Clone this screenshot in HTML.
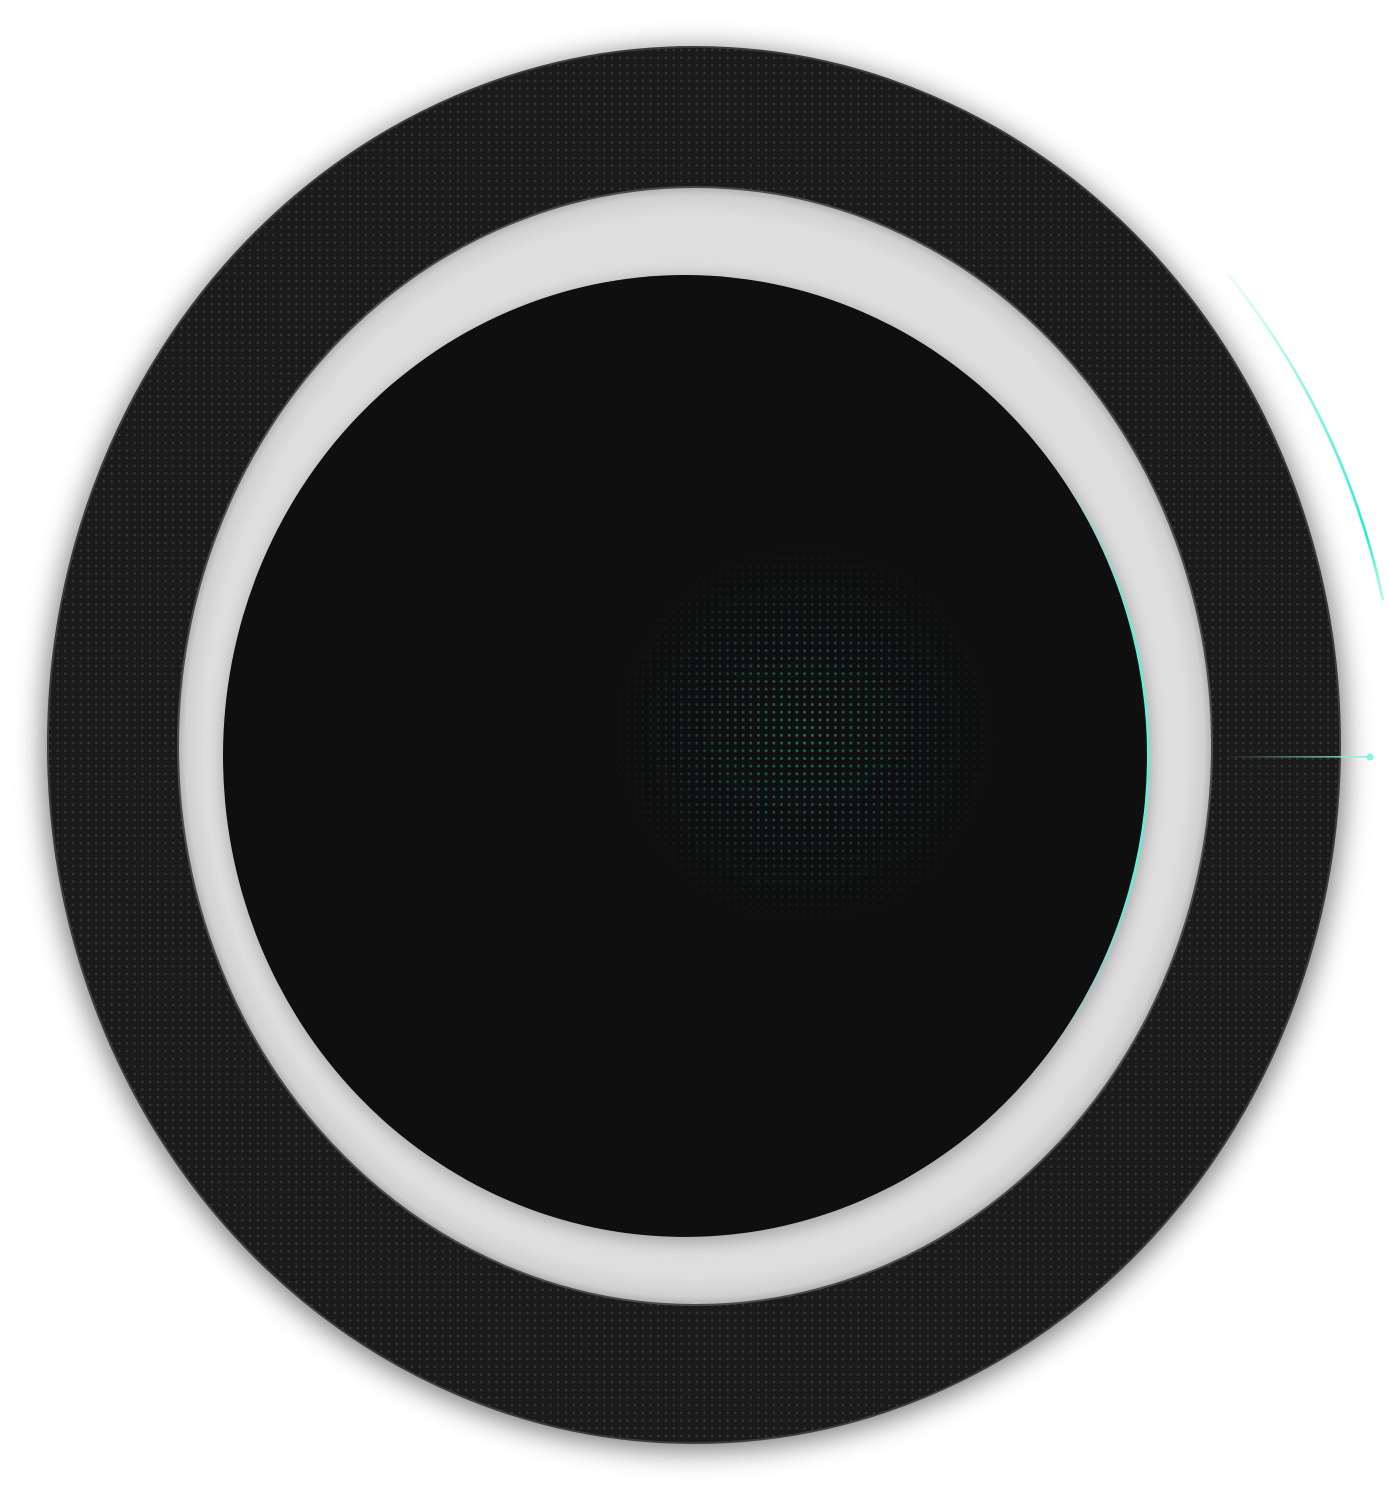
<!DOCTYPE html>
<html><head><style>html,body{margin:0;padding:0;background:#fff;width:1389px;height:1491px;overflow:hidden}</style></head>
<body>
<svg width="1389" height="1491" viewBox="0 0 1389 1491" xmlns="http://www.w3.org/2000/svg">
<defs>
<pattern id="dots" width="7.7" height="7.7" patternUnits="userSpaceOnUse">
<rect width="7.7" height="7.7" fill="#1b1b1c"/>
<circle cx="3.8" cy="3.8" r="1.3" fill="#353536"/>
</pattern>
<pattern id="gdots" width="7.7" height="7.7" patternUnits="userSpaceOnUse">
<circle cx="3.8" cy="3.8" r="1.5" fill="#1f7462"/>
</pattern>
<radialGradient id="gmask" cx="0.5" cy="0.5" r="0.5">
<stop offset="0" stop-color="#fff" stop-opacity="0.95"/>
<stop offset="1" stop-color="#fff" stop-opacity="0"/>
</radialGradient>
<mask id="m"><ellipse cx="805" cy="735" rx="200" ry="195" fill="url(#gmask)"/></mask>
<filter id="sh" x="-10%" y="-10%" width="120%" height="120%"><feGaussianBlur stdDeviation="14"/></filter>
<filter id="sh2" x="-10%" y="-10%" width="120%" height="120%"><feGaussianBlur stdDeviation="8"/></filter>
<radialGradient id="ring" cx="0.5" cy="0.5" r="0.5">
<stop offset="0.95" stop-color="#dedede"/>
<stop offset="0.985" stop-color="#d0d0d0"/>
<stop offset="1" stop-color="#b0b0b0"/>
</radialGradient>
<linearGradient id="arc" x1="0" y1="0" x2="0" y2="1">
<stop offset="0" stop-color="#2de6c8" stop-opacity="0.1"/>
<stop offset="0.8" stop-color="#16f0d0" stop-opacity="1"/>
<stop offset="1" stop-color="#7ff5e4" stop-opacity="0.6"/>
</linearGradient>
<linearGradient id="ln" gradientUnits="userSpaceOnUse" x1="1225" y1="0" x2="1370" y2="0">
<stop offset="0" stop-color="#7ee8d6" stop-opacity="0"/>
<stop offset="1" stop-color="#8ef0de"/>
</linearGradient>
<linearGradient id="edge" gradientUnits="userSpaceOnUse" x1="0" y1="470" x2="0" y2="1045">
<stop offset="0" stop-color="#5ff0dc" stop-opacity="0"/>
<stop offset="0.3" stop-color="#5ff0dc"/>
<stop offset="0.7" stop-color="#5ff0dc"/>
<stop offset="1" stop-color="#5ff0dc" stop-opacity="0"/>
</linearGradient>
<clipPath id="cl"><rect x="1040" y="460" width="200" height="590"/></clipPath>
</defs>
<ellipse cx="694" cy="750" rx="650" ry="700" fill="#000" opacity="0.55" filter="url(#sh)"/>
<ellipse cx="694" cy="745" rx="646" ry="698" fill="url(#dots)" stroke="#3c3c3c" stroke-width="2"/>
<ellipse cx="695" cy="746" rx="517" ry="559" fill="url(#ring)" stroke="#4a4a4a" stroke-width="2"/>
<ellipse cx="687" cy="760" rx="464" ry="483" fill="#000" opacity="0.25" filter="url(#sh2)"/>
<ellipse cx="686" cy="756" rx="462" ry="481" fill="none" stroke="url(#edge)" stroke-width="3" clip-path="url(#cl)"/>
<ellipse cx="685" cy="756" rx="462" ry="481" fill="#0f0f0f"/>
<rect x="600" y="530" width="410" height="410" fill="url(#gdots)" mask="url(#m)"/>
<path d="M1228 274 Q1345 420 1383 600" fill="none" stroke="url(#arc)" stroke-width="2.5"/>
<rect x="1225" y="756" width="145" height="1.6" fill="url(#ln)"/>
<circle cx="1370" cy="757" r="3.5" fill="#8ef0de"/>
</svg>
</body></html>
